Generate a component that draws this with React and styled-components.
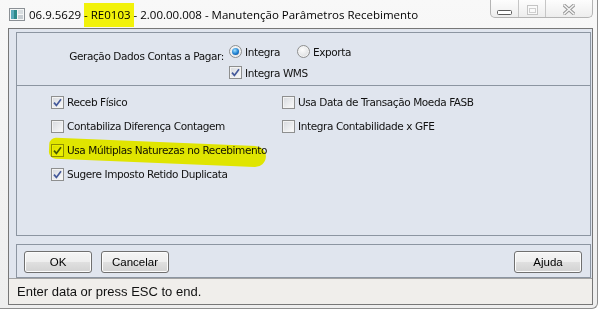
import styled, { createGlobalStyle } from "styled-components";

const GlobalStyle = createGlobalStyle`
    html, body {
        margin: 0;
        padding: 0;
        background: #ffffff;
    }
`;

const Window = styled.div`
    width: 598px;
    height: 309px;
    box-sizing: border-box;
    padding: 0 4px 0 8px;
    background: linear-gradient(#f8f8f8, #eeeeee);
    border-right: 1px solid #8e8e8e;
    border-bottom: 1px solid #8e8e8e;
    border-bottom-right-radius: 6px;
    display: flex;
    flex-direction: column;
`;

const TitleBar = styled.div`
    height: 28px;
    flex-shrink: 0;
    display: flex;
    align-items: center;
    font-family: "Open Sans", "Noto Sans", sans-serif;
    font-size: 11.5px;
    color: #000;
    >svg{
        margin: 1px 4px 0 1px;
    }
`;

const Mark = styled.span`
    background: #f2f20a;
    padding: 4px 3px 5px 0;
    margin-right: -3px;
`;

const Caption = styled.div`
    margin-left: auto;
    align-self: flex-start;
    display: flex;
    height: 18px;
    box-sizing: border-box;
    border: 1px solid #b4b4b4;
    border-top: none;
    border-radius: 0 0 5px 5px;
    background: linear-gradient(#fdfdfd, #ededed);
    overflow: hidden;
`;

const CaptionButton = styled.div`
    width: ${p => p.$w}px;
    box-sizing: border-box;
    padding-bottom: 2px;
    display: flex;
    align-items: flex-end;
    justify-content: center;
    border-left: ${p => p.$first ? "none" : "1px solid #c6c6c6"};
`;

const Client = styled.div`
    height: 277px;
    flex-shrink: 0;
    box-sizing: border-box;
    border: 1px solid #777777;
    background: #e0e5ee;
    display: flex;
    flex-direction: column;
    font-family: "DejaVu Sans", sans-serif;
    font-size: 10.5px;
    letter-spacing: -0.4px;
    color: #111;
`;

const Body = styled.div`
    height: 249px;
    flex-shrink: 0;
    box-sizing: border-box;
    padding: 3px 1px 0 7px;
    display: flex;
    flex-direction: column;
    gap: 8px;
`;

const Panel = styled.div`
    flex-shrink: 0;
    border: 1px solid #8c95a1;
    display: flex;
    flex-direction: column;
`;

const TopSection = styled.div`
    height: 52px;
    border-bottom: 1px solid #8c95a1;
    display: flex;
    gap: 5px;
`;

const FieldLabel = styled.div`
    width: 207px;
    text-align: right;
    padding-top: 17px;
`;

const Options = styled.div`
    padding-top: 8px;
    display: flex;
    flex-direction: column;
`;

const OptionRow = styled.div`
    height: 21px;
    display: flex;
    align-items: center;
`;

const Choice = styled.label`
    display: flex;
    align-items: center;
    gap: 3px;
    width: ${p => p.$w ? p.$w + "px" : "auto"};
    position: relative;
`;

const ChecksSection = styled.div`
    height: 149px;
    box-sizing: border-box;
    padding: 4px 0 0 34px;
    display: grid;
    grid-template-columns: 231px 1fr;
    grid-template-rows: repeat(4, 24px);
    grid-auto-flow: column;
    align-content: start;
`;

const Box = styled.span`
    width: 13px;
    height: 13px;
    box-sizing: border-box;
    border: 1px solid #8e8f8f;
    background: linear-gradient(135deg, #d6d9de, #fbfbfb);
    box-shadow: inset 0 0 0 1px #f3f3f3;
    display: flex;
    align-items: center;
    justify-content: center;
    flex-shrink: 0;
`;

const Round = styled(Box)`
    border-radius: 50%;
    background: radial-gradient(circle at 40% 35%, #fdfdfd, #d3d5d8);
`;

const Dot = styled.span`
    width: 7px;
    height: 7px;
    border-radius: 50%;
    background: radial-gradient(circle at 40% 35%, #9fe0ff, #1d7fd0 55%, #0c3f86);
`;

const Highlight = styled.span`
    position: absolute;
    left: -2px;
    top: 4px;
    width: 217px;
    height: 21px;
    border-radius: 8px 12px 13px 8px;
    background: #eaee00;
    transform: rotate(2.4deg);
    mix-blend-mode: darken;
    pointer-events: none;
`;

const ButtonBar = styled.div`
    height: 34px;
    flex-shrink: 0;
    box-sizing: border-box;
    border: 1px solid #8c95a1;
    padding: 6px 8px 0 7px;
    display: flex;
    gap: 9px;
    >button:last-child{
        margin-left: auto;
    }
`;

const Button = styled.button`
    width: 68px;
    height: 22px;
    border: 1px solid #707070;
    border-radius: 3px;
    background: linear-gradient(#f5f5f5 0%, #eeeeee 50%, #e0e0e0 51%, #d2d2d2 100%);
    box-shadow: inset 0 0 0 1px #fcfcfc;
    font-family: "Liberation Sans", Arial, sans-serif;
    font-size: 11.5px;
    color: #000;
    padding: 0;
`;

const StatusBar = styled.div`
    height: 26px;
    box-sizing: border-box;
    border-top: 1px solid #a3a3a3;
    background: #f0eeeb;
    padding-left: 8px;
    display: flex;
    align-items: center;
    font-family: "Liberation Sans", Arial, sans-serif;
    font-size: 13px;
    letter-spacing: 0;
    color: #111;
`;

const CheckMark = () => (
    <svg width="9" height="9" viewBox="0 0 9 9">
        <path d="M1 4.6 L3.4 7.4 L8 1.2" fill="none" stroke="#44599a" strokeWidth="1.7" />
    </svg>
);

const Check = ({ checked, children, highlight }) => (
    <Choice>
        {highlight && <Highlight />}
        <Box>{checked && <CheckMark />}</Box>
        <span>{children}</span>
    </Choice>
);

const Radio = ({ checked, children, w }) => (
    <Choice $w={w}>
        <Round>{checked && <Dot />}</Round>
        <span>{children}</span>
    </Choice>
);

const AppIcon = () => (
    <svg width="16" height="13" viewBox="0 0 16 13">
        <rect x="0.5" y="0.5" width="15" height="12" fill="#f4f6f6" stroke="#8b9095" />
        <rect x="2" y="2" width="6" height="9" fill="#2e8a8a" />
        <rect x="2" y="2" width="3" height="9" fill="#58a9b9" />
        <rect x="9" y="2" width="5" height="4" fill="#d8dde0" />
        <rect x="9" y="7" width="5" height="4" fill="#c7cdd2" />
    </svg>
);

const App = () => {
    return (
        <>
            <GlobalStyle />
            <Window>
                <TitleBar>
                    <AppIcon />
                    <span>06.9.5629 <Mark>- RE0103</Mark> - 2.00.00.008 - Manutenção Parâmetros Recebimento</span>
                    <Caption>
                        <CaptionButton $w={27} $first>
                            <svg width="15" height="5" viewBox="0 0 15 5">
                                <rect x="0.5" y="0.5" width="14" height="4" rx="1" fill="#fff" stroke="#5c5c5c" />
                            </svg>
                        </CaptionButton>
                        <CaptionButton $w={27}>
                            <svg width="11" height="10" viewBox="0 0 11 10">
                                <rect x="0.5" y="0.5" width="10" height="9" fill="#fafafa" stroke="#c4c4c4" />
                                <rect x="2.5" y="3.5" width="6" height="4" fill="none" stroke="#cfcfcf" />
                            </svg>
                        </CaptionButton>
                        <CaptionButton $w={47}>
                            <svg width="12" height="11" viewBox="0 0 12 11">
                                <path d="M1 1 L11 10 M11 1 L1 10" stroke="#9a9a9a" strokeWidth="3.4" strokeLinecap="square" />
                                <path d="M1 1 L11 10 M11 1 L1 10" stroke="#f6f6f6" strokeWidth="1.4" strokeLinecap="square" />
                            </svg>
                        </CaptionButton>
                    </Caption>
                </TitleBar>
                <Client>
                    <Body>
                        <Panel>
                            <TopSection>
                                <FieldLabel>Geração Dados Contas a Pagar:</FieldLabel>
                                <Options>
                                    <OptionRow>
                                        <Radio checked w={68}>Integra</Radio>
                                        <Radio>Exporta</Radio>
                                    </OptionRow>
                                    <OptionRow>
                                        <Check checked>Integra WMS</Check>
                                    </OptionRow>
                                </Options>
                            </TopSection>
                            <ChecksSection>
                                <Check checked>Receb Físico</Check>
                                <Check>Contabiliza Diferença Contagem</Check>
                                <Check checked highlight>Usa Múltiplas Naturezas no Recebimento</Check>
                                <Check checked>Sugere Imposto Retido Duplicata</Check>
                                <Check>Usa Data de Transação Moeda FASB</Check>
                                <Check>Integra Contabilidade x GFE</Check>
                            </ChecksSection>
                        </Panel>
                        <ButtonBar>
                            <Button>OK</Button>
                            <Button>Cancelar</Button>
                            <Button>Ajuda</Button>
                        </ButtonBar>
                    </Body>
                    <StatusBar>Enter data or press ESC to end.</StatusBar>
                </Client>
            </Window>
        </>
    );
}

export default App;
